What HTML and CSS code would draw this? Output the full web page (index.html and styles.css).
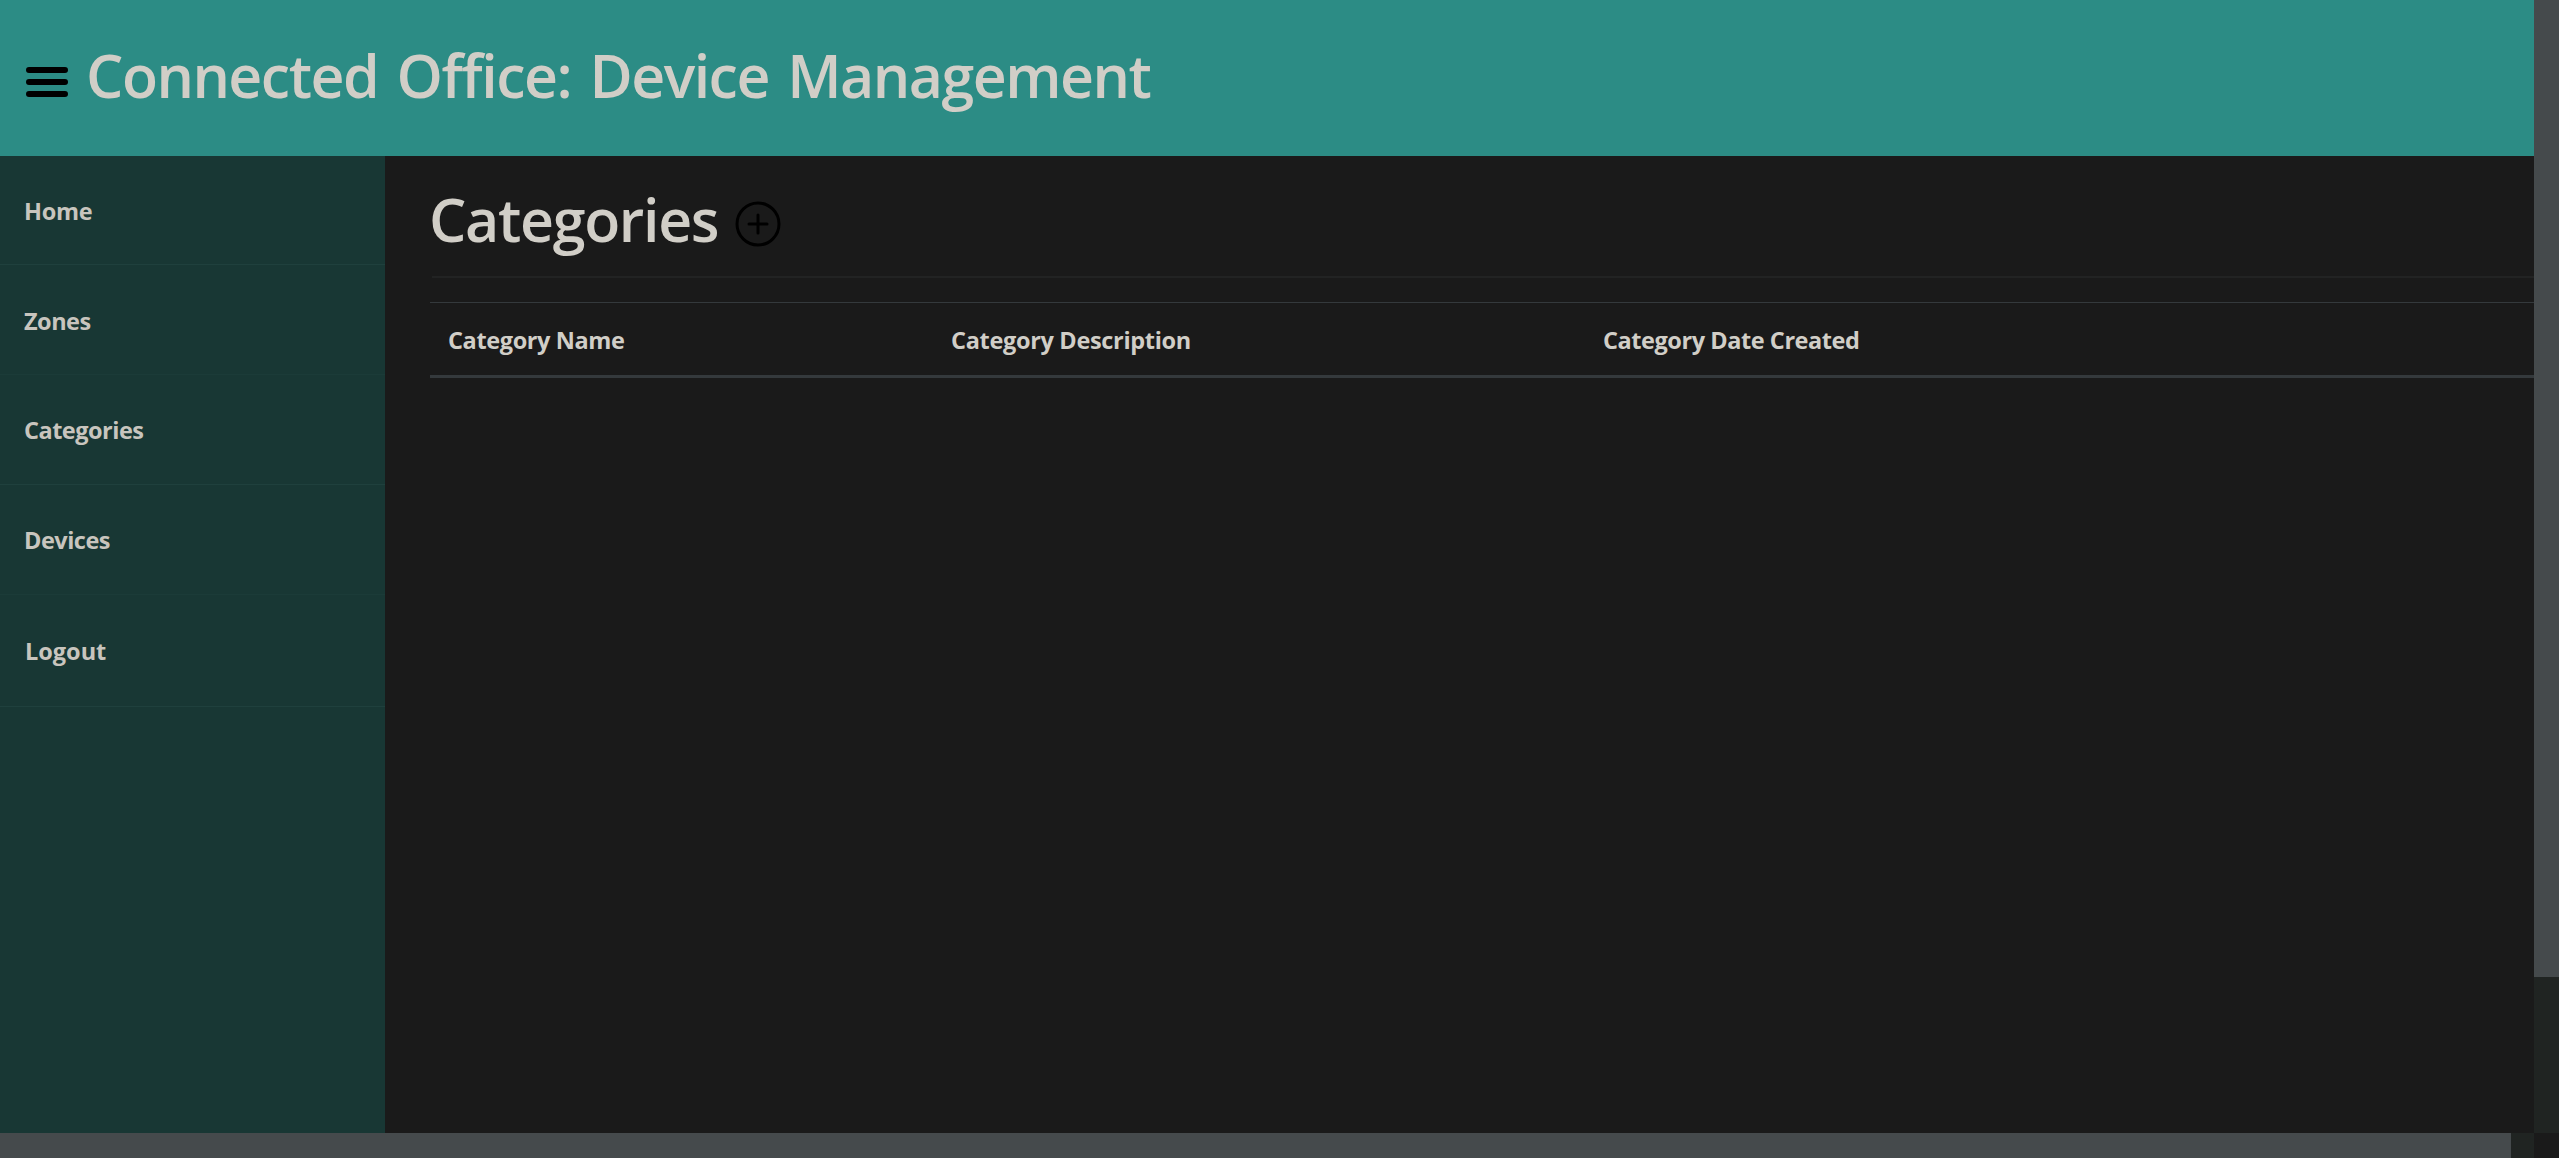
FILE: index.html
```
<!DOCTYPE html>
<html lang="en">
<head>
<meta charset="utf-8">
<title>Categories - Connected Office</title>
<link rel="stylesheet" href="styles.css">
</head>
<body>
<div class="viewport">
  <div class="page">
    <header class="topbar">
      <svg class="menu-icon" viewBox="0 0 42 30" aria-label="Menu">
        <path d="M3 3H39M3 15H39M3 27H39" stroke="#000" stroke-width="6" stroke-linecap="round"/>
      </svg>
      <h1 class="heading brand">Connected Office: Device Management</h1>
    </header>
    <div class="body">
      <nav class="sidebar">
        <a class="nav-item home">Home</a>
        <a class="nav-item zones">Zones</a>
        <a class="nav-item categories">Categories</a>
        <a class="nav-item devices">Devices</a>
        <a class="nav-item logout">Logout</a>
      </nav>
      <main class="content">
        <div class="title-row">
          <h2 class="heading">Categories</h2>
          <svg class="add-icon" viewBox="0 0 46 46" fill="none" stroke="#000" stroke-width="3" aria-label="Add category">
            <circle cx="23" cy="23" r="21"/>
            <path d="M23 14V32M14 23H32" stroke-linecap="round"/>
          </svg>
        </div>
        <hr class="divider">
        <table class="table">
          <thead>
            <tr>
              <th class="col-name">Category Name</th>
              <th class="col-description">Category Description</th>
              <th class="col-date">Category Date Created</th>
            </tr>
          </thead>
        </table>
      </main>
    </div>
  </div>
  <div class="scroll-y"><div class="thumb-y"></div></div>
  <div class="scroll-x"><div class="thumb-x"></div></div>
  <div class="corner"></div>
</div>
</body>
</html>
```
FILE: styles.css
```
* {
  box-sizing: border-box;
}

body {
  margin: 0;
  overflow: hidden;
  background: #1a1a1a;
  color: #d1cec7;
  font-family: "Segoe UI", "Open Sans", "Noto Sans", sans-serif;
}

.viewport {
  display: grid;
  grid-template-columns: 1fr 25px;
  grid-template-rows: 1fr 25px;
  width: 100vw;
  height: 100vh;
}

.page {
  display: flex;
  flex-direction: column;
  min-width: 0;
  overflow: hidden;
}

.topbar {
  display: flex;
  flex: none;
  align-items: flex-start;
  gap: 18px;
  height: 156px;
  padding: 34px 26px;
  background: #2c8c85;
}

.menu-icon {
  width: 42px;
  height: 30px;
  margin-top: 33px;
}

.heading {
  margin: 0;
  padding-top: 1px;
  font-size: 59px;
  font-weight: 580;
  line-height: 80px;
  letter-spacing: -1.3px;
  white-space: nowrap;
}

.brand {
  letter-spacing: -1.5px;
  word-spacing: 4.5px;
}

.body {
  display: flex;
  flex: 1;
}

.sidebar {
  flex: none;
  width: 385px;
  background: #183734;
}

.nav-item {
  display: block;
  height: 110px;
  padding: 1px 24px 0;
  border-bottom: 1px solid #1f403d;
  color: #c8c5be;
  font-size: 23.5px;
  font-weight: 700;
  line-height: 109px;
  letter-spacing: -0.5px;
}

.home {
  height: 109px;
  letter-spacing: -0.3px;
}

.zones,
.devices {
  border-bottom-color: #1b3b38;
}

.zones {
  padding-top: 2px;
}

.logout {
  height: 112px;
  padding: 1px 25px 0;
  line-height: 110px;
  letter-spacing: 0;
}

.content {
  flex: 1;
  padding: 22px 0 0 45px;
}

.title-row {
  display: flex;
  align-items: flex-start;
  gap: 17px;
  height: 98px;
  margin-left: -1px;
}

.add-icon {
  width: 46px;
  height: 46px;
  margin-top: 23px;
}

.divider {
  height: 2px;
  margin: 0 0 24px 2px;
  border: 0;
  background: #222323;
}

.table {
  width: 100%;
  border-collapse: separate;
  border-spacing: 0;
  table-layout: fixed;
}

.table th {
  height: 76px;
  padding: 1px 17px 0 18px;
  border-top: 1px solid #34393c;
  border-bottom: 3px solid #34393c;
  font-size: 23.5px;
  font-weight: 700;
  text-align: left;
  letter-spacing: -0.38px;
}

.table .col-name {
  width: 503px;
}

.table .col-description {
  width: 652px;
  letter-spacing: -0.32px;
}

.table .col-date {
  letter-spacing: -0.44px;
}

.scroll-y,
.scroll-x {
  background: #202422;
}

.thumb-y {
  height: 977px;
  background: #454a4c;
}

.thumb-x {
  width: 2511px;
  height: 100%;
  background: #454a4c;
}

.corner {
  background: #1a1a1a;
}
```
